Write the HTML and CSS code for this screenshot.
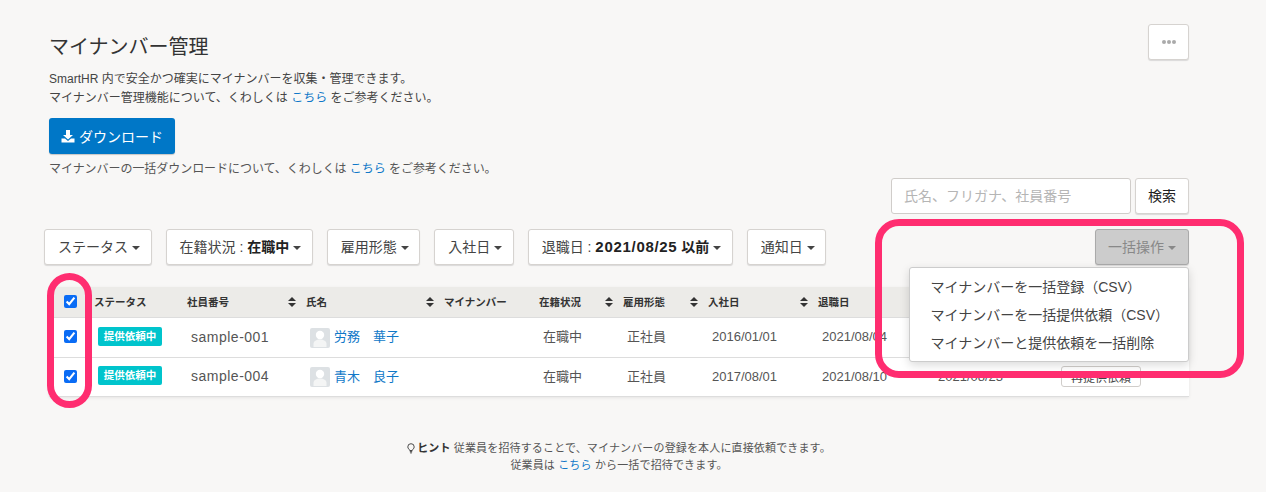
FILE: index.html
```html
<!DOCTYPE html>
<html lang="ja">
<head>
<meta charset="utf-8">
<title>マイナンバー管理</title>
<link rel="stylesheet" href="styles.css">
</head>
<body>
<main class="page">
  <header class="head">
    <div class="head-main">
      <h1 class="title">マイナンバー管理</h1>
      <p class="lead">SmartHR 内で安全かつ確実にマイナンバーを収集・管理できます。<br>マイナンバー管理機能について、くわしくは <a href="#">こちら</a> をご参考ください。</p>
      <button class="btn-primary"><svg class="dl-icon" viewBox="0 0 14 14" width="14" height="14"><path fill="#fff" d="M5 1h4v5h3L7 10.500 2 6h3zM0.500 9.500H4L7 12l3-2.500h3.500V13.500H0.500z"/></svg>ダウンロード</button>
      <p class="caption">マイナンバーの一括ダウンロードについて、くわしくは <a href="#">こちら</a> をご参考ください。</p>
    </div>
    <button class="btn btn-more" aria-label="その他"><i></i><i></i><i></i></button>
  </header>

  <div class="search">
    <input class="search-input" type="text" placeholder="氏名、フリガナ、社員番号">
    <button class="btn btn-search">検索</button>
  </div>

  <div class="toolbar">
    <div class="filters">
      <button class="btn">ステータス<span class="caret"></span></button>
      <button class="btn">在籍状況 : <b>在職中</b><span class="caret"></span></button>
      <button class="btn">雇用形態<span class="caret"></span></button>
      <button class="btn">入社日<span class="caret"></span></button>
      <button class="btn">退職日 : <b><span class="date">2021/08/25</span> 以前</b><span class="caret"></span></button>
      <button class="btn">通知日<span class="caret"></span></button>
    </div>
    <button class="btn btn-bulk">一括操作<span class="caret"></span></button>
    <ul class="menu">
      <li>マイナンバーを一括登録（CSV）</li>
      <li>マイナンバーを一括提供依頼（CSV）</li>
      <li>マイナンバーと提供依頼を一括削除</li>
    </ul>
  </div>

  <table class="grid">
    <colgroup>
      <col class="c-check"><col class="c-status"><col class="c-id"><col class="c-name"><col class="c-my"><col class="c-emp"><col class="c-type"><col class="c-in"><col class="c-out"><col class="c-notice"><col class="c-act">
    </colgroup>
    <thead>
      <tr>
        <th class="cell-check"><input type="checkbox" checked></th>
        <th>ステータス</th>
        <th><div class="th-in">社員番号<span class="sort"></span></div></th>
        <th><div class="th-in">氏名<span class="sort"></span></div></th>
        <th>マイナンバー</th>
        <th><div class="th-in">在籍状況<span class="sort"></span></div></th>
        <th><div class="th-in">雇用形態<span class="sort"></span></div></th>
        <th><div class="th-in">入社日<span class="sort"></span></div></th>
        <th><div class="th-in">退職日<span class="sort"></span></div></th>
        <th></th>
        <th></th>
      </tr>
    </thead>
    <tbody>
      <tr class="row-first">
        <td class="cell-check"><input type="checkbox" checked></td>
        <td class="cell-badge"><span class="badge">提供依頼中</span></td>
        <td class="latin-id">sample-001</td>
        <td class="cell-person"><a class="person" href="#"><svg class="avatar" viewBox="0 0 20 20" width="20" height="20"><rect width="20" height="20" rx="2" fill="#dde1e4"/><circle cx="10" cy="7" r="4.200" fill="#fff"/><path fill="#f4f5f5" d="M3.500 19v-3c0-3 3-4.500 6.500-4.500s6.500 1.500 6.500 4.500v3z"/></svg><span class="person-name">労務　華子</span></a></td>
        <td></td>
        <td class="cell-jp">在職中</td>
        <td class="cell-jp">正社員</td>
        <td>2016/01/01</td>
        <td>2021/08/04</td>
        <td></td>
        <td></td>
      </tr>
      <tr>
        <td class="cell-check"><input type="checkbox" checked></td>
        <td class="cell-badge"><span class="badge">提供依頼中</span></td>
        <td class="latin-id">sample-004</td>
        <td class="cell-person"><a class="person" href="#"><svg class="avatar" viewBox="0 0 20 20" width="20" height="20"><rect width="20" height="20" rx="2" fill="#dde1e4"/><circle cx="10" cy="7" r="4.200" fill="#fff"/><path fill="#f4f5f5" d="M3.500 19v-3c0-3 3-4.500 6.500-4.500s6.500 1.500 6.500 4.500v3z"/></svg><span class="person-name">青木　良子</span></a></td>
        <td></td>
        <td class="cell-jp">在職中</td>
        <td class="cell-jp">正社員</td>
        <td>2017/08/01</td>
        <td>2021/08/10</td>
        <td>2021/08/23</td>
        <td><button class="btn-small">再提供依頼</button></td>
      </tr>
    </tbody>
  </table>

  <footer class="hint">
    <p><svg class="bulb" viewBox="0 0 10 12" width="8" height="11"><path fill="none" stroke="#333" stroke-width="1.100" d="M3.400 8.500C3.200 7 1 6.200 1 4a4 4 0 0 1 8 0c0 2.200-2.200 3-2.400 4.500z"/><path stroke="#333" stroke-width="1.200" d="M3.500 10h3M4 11.500h2"/></svg><b>ヒント</b> 従業員を招待することで、マイナンバーの登録を本人に直接依頼できます。</p>
    <p>従業員は <a href="#">こちら</a> から一括で招待できます。</p>
  </footer>

  <div class="mark mark-left"></div>
  <div class="mark mark-right"></div>
</main>
</body>
</html>
```
FILE: styles.css
```css
* { box-sizing: border-box; }
html, body { margin: 0; height: 100%; }
body {
  background: #f8f7f6;
  color: #333;
  font-family: "Liberation Sans", "Noto Sans CJK JP", sans-serif;
  font-size: 12px;
  overflow: hidden;
}
a { color: #0f78c8; text-decoration: none; }
p { margin: 0; }
button { font-family: inherit; color: inherit; }

.page { position: relative; height: 492px; padding: 24px 77px 0 49px; }

.head { display: flex; justify-content: space-between; align-items: flex-start; }
.title { margin: 11px 0 11px; font-size: 20px; font-weight: 400; line-height: 24px; }
.lead { line-height: 19px; color: #444; }
.btn-primary {
  display: flex; align-items: center; justify-content: center; gap: 4px;
  width: 126px; height: 36px; margin-top: 10px; border: 0; border-radius: 3px;
  background: #0077c7; color: #fff; font-size: 14px; box-shadow: 0 1px 1px rgba(0,0,0,.2);
}
.dl-icon { flex: none; }
.caption { margin-top: 6px; line-height: 18px; color: #555; letter-spacing: -.05px; }

.btn {
  height: 36px; padding: 0 10.500px 2px 13px; background: #fff; border: 1px solid #d6d3d0;
  border-radius: 3px; font-size: 14px; color: #444;
  box-shadow: 0 1px 1px rgba(0,0,0,.12); white-space: nowrap;
}
.btn b { color: #222; }
.date { font-size: 15px; letter-spacing: .7px; }
.caret {
  display: inline-block; margin-left: 4px; vertical-align: 2px;
  border: 4px solid transparent; border-top-color: currentColor; border-bottom: 0;
}
.btn-more { display: flex; align-items: center; justify-content: center; gap: 1px; width: 41px; padding: 0; }
.btn-more i { width: 4px; height: 4px; border-radius: 50%; background: #aaa; }

.search { display: flex; justify-content: flex-end; gap: 4px; height: 36px; }
.search-input {
  width: 240px; height: 36px; padding: 0 12px; border: 1px solid #d0cdca; border-radius: 3px;
  background: #fff; font: inherit; font-size: 14px;
}
.search-input::placeholder { color: #b5b5b5; opacity: 1; }
.btn-search { width: 54px; padding: 0 0 2px; color: #222; }

.toolbar { position: relative; display: flex; justify-content: space-between; margin: 15px 0 22px -5px; }
.filters { display: flex; gap: 14px; }
.btn-bulk { width: 94px; padding: 0 0 2px; background: #ccc; border-color: #aaa; color: #888; }
.menu {
  position: absolute; right: 0; top: 38px; z-index: 3; width: 280px; height: 95px; margin: 0;
  padding: 5px 0 0 20.500px; list-style: none; background: #fff; border: 1px solid #ccc; border-radius: 3px;
  box-shadow: 0 3px 10px rgba(0,0,0,.15); font-size: 14px; color: #444;
}
.menu li { height: 28px; line-height: 28px; white-space: nowrap; }

.grid {
  width: 1140px; table-layout: fixed; border-collapse: collapse; background: #fff;
  box-shadow: 0 1px 3px rgba(0,0,0,.08); font-size: 13px; color: #555;
}
.c-check { width: 41px; }
.c-status { width: 93px; }
.c-id { width: 119px; }
.c-name { width: 138px; }
.c-my { width: 95px; }
.c-emp { width: 84px; }
.c-type { width: 85px; }
.c-in { width: 110px; }
.c-out { width: 116px; }
.c-notice { width: 123px; }
.c-act { width: 136px; }
th {
  height: 30px; padding: 0 6px 0 4px; background: #ecebe8; border-bottom: 1px solid #ddd;
  font-size: 10.500px; font-weight: 700; color: #333; text-align: left; white-space: nowrap;
}
.th-in { display: flex; justify-content: space-between; align-items: center; }
td { height: 39px; padding: 0 4px 1px 8px; border-bottom: 1px solid #ddd; white-space: nowrap; vertical-align: middle; }
.row-first td { height: 40px; }
td.cell-jp { padding-bottom: 3px; }
th.cell-check { padding: 0 0 0 15px; }
td.cell-check { padding: 0 0 1px 15px; }
.cell-check input { display: block; width: 13px; height: 13px; margin: 0; accent-color: #0a6cf5; }
td.cell-badge { padding-bottom: 2px; }
.badge {
  display: block; width: 64px; height: 19px; line-height: 19px; text-align: center; border-radius: 2px;
  background: #00c4cc; color: #fff; font-size: 10.500px; font-weight: 700;
}
.latin-id { font-size: 14px; letter-spacing: .5px; }
td.cell-person { padding-bottom: 0; padding-top: 1px; }
.person { display: flex; align-items: center; gap: 4px; }
.person-name { padding-bottom: 4px; }
.avatar { flex: none; }
.sort { position: relative; flex: none; width: 8px; height: 9px; }
.sort::before, .sort::after {
  content: ""; position: absolute; left: 0; border: 4px solid transparent;
}
.sort::before { top: -0.500px; border-top: 0; border-bottom-color: #333; }
.sort::after { bottom: -0.500px; border-bottom: 0; border-top-color: #333; }
.btn-small {
  display: block; width: 80px; height: 21px; margin: 0; padding: 0; background: #fff; border: 1px solid #d0cdca;
  border-radius: 3px; font-size: 12px; color: #444;
}

.hint { margin-top: 43px; font-size: 11px; letter-spacing: .15px; line-height: 17px; text-align: center; color: #555; }
.hint b { color: #333; }
.bulb { margin-right: 2px; vertical-align: -2px; }

.mark { position: absolute; z-index: 5; border: 7px solid #ff2d70; border-radius: 24px; pointer-events: none; }
.mark-left { left: 47px; top: 273px; width: 45px; height: 135px; }
.mark-right { left: 875px; top: 219px; width: 369px; height: 159px; }
```
